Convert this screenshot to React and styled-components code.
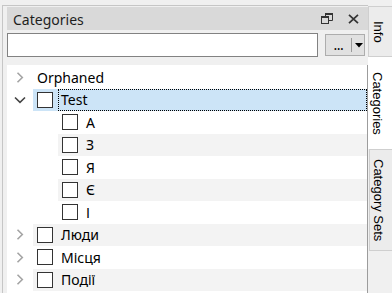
import React from 'react'
import styled, { createGlobalStyle } from 'styled-components'

const GlobalStyle = createGlobalStyle`
  html, body {
    margin: 0;
    padding: 0;
    background: #f0f0f0;
    font-family: "Noto Sans", "Open Sans", sans-serif;
  }
`

const Screen = styled.div`
  display: flex;
  width: 392px;
  height: 293px;
  padding-top: 5px;
  box-sizing: border-box;
  overflow: hidden;
`

const DockPanel = styled.div`
  display: flex;
  flex-direction: column;
  margin-left: 2px;
  width: 366px;
  border-left: 1px solid #c6c6c6;
  border-top: 1px solid #c6c6c6;
  padding: 1px 0 0 4px;
  box-sizing: border-box;
`

const Header = styled.div`
  display: flex;
  align-items: center;
  height: 23px;
  background: #d9d9d9;
  padding: 0 9px 0 6px;
  flex-shrink: 0;
`

const Title = styled.div`
  flex: 1;
  font-size: 14px;
  color: #1e1e1e;
  line-height: 23px;
  margin-top: 1px;
`

const HeaderButton = styled.div`
  display: flex;
  align-items: center;
  justify-content: center;
  margin-left: ${p => p.gap || 0}px;
  height: 23px;
`

const SearchRow = styled.div`
  display: flex;
  align-items: center;
  margin-top: 3px;
  height: 24px;
  flex-shrink: 0;
`

const SearchInput = styled.div`
  flex: 1;
  height: 24px;
  box-sizing: border-box;
  border: 1px solid #828282;
  background: #fff;
`

const PickButton = styled.div`
  display: flex;
  align-items: center;
  width: 40px;
  height: 22px;
  margin: 0 3px 0 7px;
  box-sizing: border-box;
  border: 1px solid #adadad;
  background: #e1e1e1;
`

const Dots = styled.div`
  width: 25px;
  text-align: center;
  font-size: 14px;
  line-height: 20px;
  color: #000;
  letter-spacing: -0.5px;
`

const Divider = styled.div`
  width: 1px;
  height: 14px;
  background: #9a9a9a;
`

const Arrow = styled.div`
  flex: 1;
  display: flex;
  align-items: center;
  justify-content: center;
  padding-left: 1px;
`

const Tree = styled.div`
  flex: 1;
  margin-top: 8px;
  background: #fff;
  border-right: 1px solid #9c9c9c;
  padding-top: 1px;
`

const Row = styled.div`
  display: flex;
  height: 22.5px;
`

const Expander = styled.div`
  width: 26px;
  margin-left: ${p => p.level * 25}px;
  display: flex;
  align-items: center;
  justify-content: center;
  flex-shrink: 0;
`

const RowBody = styled.div`
  flex: 1;
  display: flex;
  align-items: center;
  padding-left: 4px;
  background: ${p => (p.tone === 'selected' ? '#cce4f7' : p.tone === 'alt' ? '#f3f3f3' : '#fff')};
`

const Check = styled.div`
  width: 16px;
  height: 16px;
  box-sizing: border-box;
  border: 1px solid #333;
  background: #fff;
  flex-shrink: 0;
`

const Label = styled.div`
  flex: 1;
  align-self: stretch;
  display: flex;
  align-items: center;
  margin-left: ${p => (p.bare ? -3 : 5)}px;
  padding-left: 2px;
  border: 1px ${p => (p.focused ? 'dotted #000' : 'solid transparent')};
  font-size: 14px;
  color: #000;
  white-space: nowrap;
`

const TabStrip = styled.div`
  width: 24px;
  display: flex;
  flex-direction: column;
`

const Tab = styled.div`
  writing-mode: vertical-rl;
  font-family: "Liberation Sans", Arial, sans-serif;
  font-size: 13px;
  color: #000;
  box-sizing: border-box;
  height: ${p => p.h}px;
  margin-top: ${p => p.top || 0}px;
  margin-left: ${p => p.inset || 0}px;
  padding-right: 5px;
  display: flex;
  align-items: center;
  justify-content: center;
  background: ${p => (p.active ? '#fff' : '#ececec')};
  border: ${p => (p.active ? 'none' : '1px solid #cfcfcf')};
  border-right: none;
`

function Chevron({ open }) {
  if (open) {
    return (
      <svg width="12" height="8" viewBox="0 0 12 8">
        <path d="M1 1.5 L6 6.3 L11 1.5" fill="none" stroke="#444" strokeWidth="1.6" />
      </svg>
    )
  }
  return (
    <svg width="8" height="11" viewBox="0 0 8 11">
      <path d="M1.5 0.8 L6.3 5.5 L1.5 10.2" fill="none" stroke="#a4a4a4" strokeWidth="1.6" />
    </svg>
  )
}

const items = [
  { label: 'Orphaned', level: 0, expander: 'closed', bare: true },
  { label: 'Test', level: 0, expander: 'open', selected: true },
  { label: 'А', level: 1 },
  { label: 'З', level: 1 },
  { label: 'Я', level: 1 },
  { label: 'Є', level: 1 },
  { label: 'І', level: 1 },
  { label: 'Люди', level: 0, expander: 'closed' },
  { label: 'Місця', level: 0, expander: 'closed' },
  { label: 'Події', level: 0, expander: 'closed' },
]

export default function App() {
  return (
    <>
      <GlobalStyle />
      <Screen>
        <DockPanel>
          <Header>
            <Title>Categories</Title>
            <HeaderButton>
              <svg width="12" height="11" viewBox="0 0 12 11">
                <rect x="4" y="0" width="8" height="2" fill="#333" />
                <path d="M4.5 2 V3 M11.5 2 V7.5 H8" fill="none" stroke="#333" strokeWidth="1" />
                <rect x="0" y="3" width="8" height="2" fill="#333" />
                <rect x="0.5" y="4.5" width="7" height="6" fill="none" stroke="#333" strokeWidth="1" />
              </svg>
            </HeaderButton>
            <HeaderButton gap={15}>
              <svg width="11" height="10" viewBox="0 0 11 10">
                <path d="M1 0.8 L10 9.2 M10 0.8 L1 9.2" stroke="#333" strokeWidth="1.7" />
              </svg>
            </HeaderButton>
          </Header>

          <SearchRow>
            <SearchInput />
            <PickButton>
              <Dots>...</Dots>
              <Divider />
              <Arrow>
                <svg width="8" height="5" viewBox="0 0 8 5">
                  <polygon points="0,0 8,0 4,4.5" fill="#000" />
                </svg>
              </Arrow>
            </PickButton>
          </SearchRow>

          <Tree>
            {items.map((it, i) => (
              <Row key={it.label}>
                <Expander level={it.level}>
                  {it.expander && <Chevron open={it.expander === 'open'} />}
                </Expander>
                <RowBody tone={it.selected ? 'selected' : i % 2 ? 'alt' : 'none'}>
                  {!it.bare && <Check />}
                  <Label bare={it.bare} focused={it.selected}>{it.label}</Label>
                </RowBody>
              </Row>
            ))}
          </Tree>
        </DockPanel>

        <TabStrip>
          <Tab h={51} top={1}>Info</Tab>
          <Tab h={92} active>Categories</Tab>
          <Tab h={102} inset={1}>Category Sets</Tab>
        </TabStrip>
      </Screen>
    </>
  )
}
